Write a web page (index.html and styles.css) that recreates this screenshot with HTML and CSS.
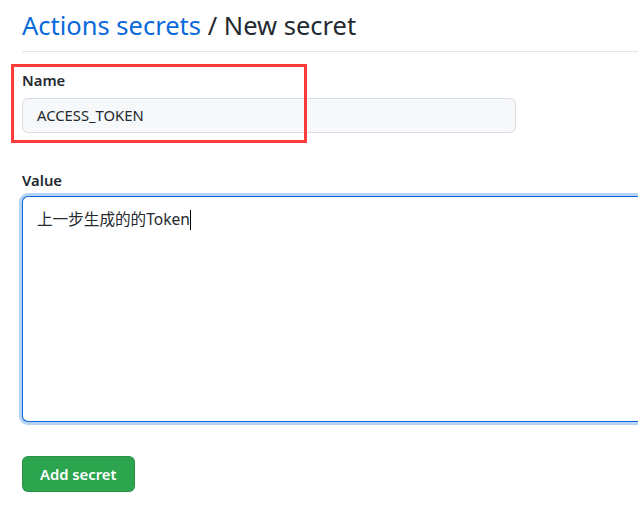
FILE: index.html
```html
<!DOCTYPE html>
<html lang="zh-CN">
<head>
<meta charset="utf-8">
<title>New secret</title>
<link rel="stylesheet" href="styles.css">
</head>
<body>
<div class="page">
  <div class="subhead">
    <h2 class="subhead-heading"><a class="crumb" href="#">Actions secrets</a> / New secret</h2>
  </div>
  <form class="form">
    <div class="form-group">
      <label class="form-label">Name</label>
      <div class="input">ACCESS_TOKEN</div>
    </div>
    <div class="form-group value-group">
      <label class="form-label">Value</label>
      <div class="focus-ring">
        <div class="textarea">上一步生成的的Token<span class="caret"></span></div>
      </div>
    </div>
    <button type="button" class="btn-primary">Add secret</button>
  </form>
  <div class="annotation"></div>
</div>
</body>
</html>
```

FILE: styles.css
```css
html, body {
  margin: 0;
  padding: 0;
  background: #ffffff;
  overflow: hidden;
}
body {
  font-family: "Noto Sans", "Open Sans", "Noto Sans CJK SC", sans-serif;
  font-size: 14.8px;
  line-height: 1.5;
  color: #24292f;
}
.page {
  position: relative;
  padding-left: 22px;
  width: 616px;
}
.subhead {
  padding-top: 7px;
  padding-bottom: 8px;
  border-bottom: 1px solid #e4e7ea;
}
.subhead-heading {
  margin: 0;
  font-size: 25.5px;
  font-weight: 400;
  line-height: 36px;
  color: #24292f;
}
.crumb {
  color: #0969da;
  text-decoration: none;
}
.form {
  display: flex;
  flex-direction: column;
  align-items: flex-start;
}
.form-group {
  display: flex;
  flex-direction: column;
  align-self: stretch;
  margin-top: 18px;
}
.form-label {
  font-weight: 600;
  font-size: 14.8px;
  line-height: 21px;
}
.input {
  box-sizing: border-box;
  margin-top: 7px;
  width: 494px;
  height: 35px;
  padding: 0 14px;
  border: 1px solid #d8dde3;
  border-radius: 6px;
  background: #f6f8fa;
  line-height: 33px;
  color: #24292f;
}
.value-group {
  margin-top: 37px;
  margin-left: -3px;
}
.value-group .form-label {
  margin-left: 3px;
}
.focus-ring {
  margin-top: 2px;
  padding: 3px 0 3px 3px;
  border-radius: 9px 0 0 9px;
  background: #b6d3f5;
}
.textarea {
  box-sizing: border-box;
  height: 226px;
  padding: 12px 14px;
  border: 1px solid #0969da;
  border-right: 0;
  border-radius: 6px 0 0 6px;
  background: #ffffff;
  font-family: "Noto Sans", "Noto Sans CJK SC", sans-serif;
  font-size: 15.6px;
  line-height: 21px;
  color: #24292f;
}
.caret {
  display: inline-block;
  width: 1px;
  height: 20px;
  background: #000;
  vertical-align: -5px;
}
.btn-primary {
  margin-top: 31px;
  height: 36px;
  padding: 0 17px;
  border: 1px solid rgba(27, 31, 36, 0.15);
  border-radius: 6px;
  background: #2da44e;
  color: #ffffff;
  font-family: inherit;
  font-size: 14.8px;
  font-weight: 600;
  line-height: 20px;
}
.annotation {
  position: absolute;
  left: 11px;
  top: 64px;
  width: 290px;
  height: 73px;
  border: 3px solid #ff3b3b;
  pointer-events: none;
}
```
